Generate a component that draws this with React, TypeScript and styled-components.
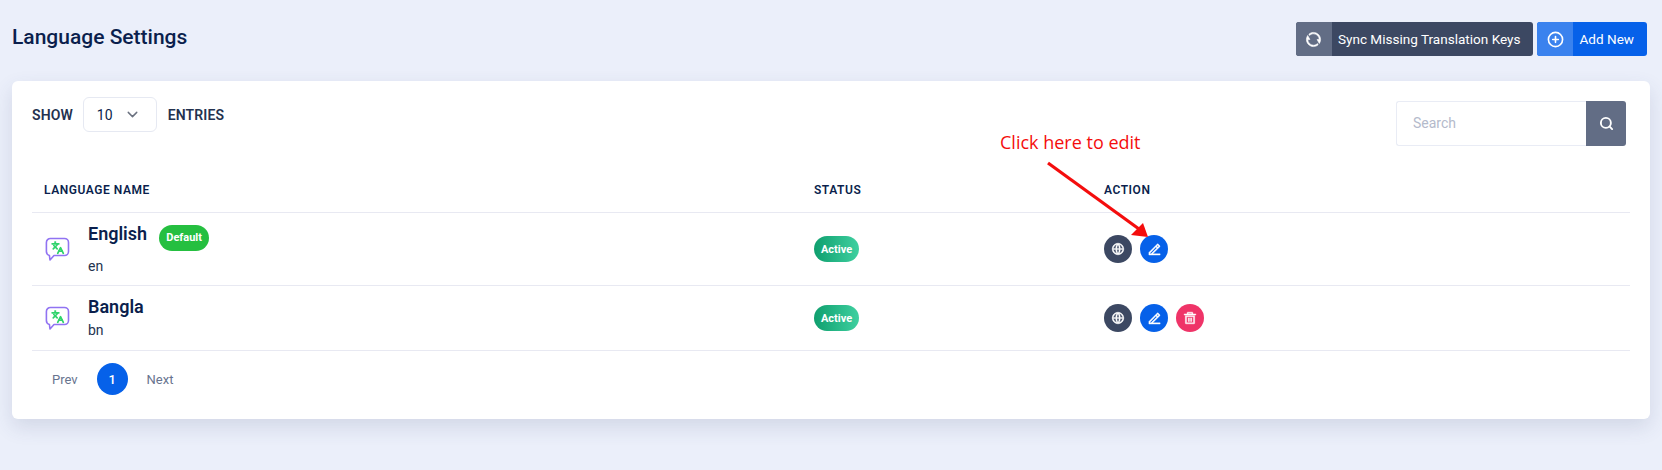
import React from "react";
import styled, { createGlobalStyle } from "styled-components";
import { RiEdit2Line, RiDeleteBin5Line, RiGlobalLine, RiRefreshLine } from "react-icons/ri";
import { LuSearch, LuCirclePlus, LuChevronDown } from "react-icons/lu";

const GlobalStyle = createGlobalStyle`
  html, body {
    margin: 0;
    padding: 0;
    background: #ebeffa;
    font-family: Roboto, "Liberation Sans", sans-serif;
    color: #0b1f4d;
  }
`;

interface Language {
  name: string;
  code: string;
  isDefault?: boolean;
  canDelete?: boolean;
}

const languages: Language[] = [
  { name: "English", code: "en", isDefault: true },
  { name: "Bangla", code: "bn", canDelete: true },
];

function TranslateBubble() {
  return (
    <svg width="25" height="25" viewBox="0 0 25 25" fill="none">
      <path
        d="M5.5 1.5h14a4 4 0 0 1 4 4v9a4 4 0 0 1-4 4h-10.5l-4 4.5-.6-4.6a4 4 0 0 1-3-3.9v-9a4 4 0 0 1 4-4z"
        stroke="#9173f2"
        strokeWidth="1.6"
        strokeLinejoin="round"
      />
      <g transform="translate(6 4) scale(0.56)" stroke="#2fd36b" strokeWidth="3" strokeLinecap="round" strokeLinejoin="round">
        <path d="m5 8 6 6" />
        <path d="m4 14 6-6 2-3" />
        <path d="M2 5h12" />
        <path d="M7 2h1" />
        <path d="m22 22-5-10-5 10" />
        <path d="M14 18h6" />
      </g>
    </svg>
  );
}

export default function App() {
  return (
    <Page>
      <GlobalStyle />
      <Header>
        <Title>Language Settings</Title>
        <HeaderActions>
          <IconButton $main="#3c4862" $side="#626d85">
            <span><RiRefreshLine size={17} stroke="currentColor" strokeWidth={0.8} /></span>
            <b>Sync Missing Translation Keys</b>
          </IconButton>
          <IconButton $main="#0661e9" $side="#3a82ee">
            <span><LuCirclePlus size={17} strokeWidth={2.3} /></span>
            <b>Add New</b>
          </IconButton>
        </HeaderActions>
      </Header>
      <Card>
        <Toolbar>
          <Entries>
            <EntriesLabel>SHOW</EntriesLabel>
            <Select>
              <span>10</span>
              <LuChevronDown size={17} color="#6b7280" />
            </Select>
            <EntriesLabel>ENTRIES</EntriesLabel>
          </Entries>
          <SearchBox>
            <SearchInput placeholder="Search" />
            <SearchButton><LuSearch size={15} strokeWidth={3} /></SearchButton>
          </SearchBox>
        </Toolbar>
        <HeadRow>
          <HeadCell>LANGUAGE NAME</HeadCell>
          <HeadCell>STATUS</HeadCell>
          <HeadCell>ACTION</HeadCell>
        </HeadRow>
        {languages.map((lang) => (
          <Row key={lang.code} $tall={lang.isDefault}>
            <NameCell>
              <TranslateBubble />
              <NameBlock>
                <NameLine $spaced={lang.isDefault}>
                  <Name>{lang.name}</Name>
                  {lang.isDefault && <DefaultBadge>Default</DefaultBadge>}
                </NameLine>
                <Code>{lang.code}</Code>
              </NameBlock>
            </NameCell>
            <Cell>
              <ActiveBadge>Active</ActiveBadge>
            </Cell>
            <ActionCell>
              <RoundButton $bg="#3c4862"><RiGlobalLine size={14} stroke="currentColor" strokeWidth={0.7} /></RoundButton>
              <RoundButton $bg="#0661e9"><RiEdit2Line size={15} stroke="currentColor" strokeWidth={0.6} /></RoundButton>
              {lang.canDelete && (
                <RoundButton $bg="#ef3468"><RiDeleteBin5Line size={14} stroke="currentColor" strokeWidth={0.7} /></RoundButton>
              )}
            </ActionCell>
          </Row>
        ))}
        <Pagination>
          <PageLink>Prev</PageLink>
          <PageCurrent>1</PageCurrent>
          <PageLink>Next</PageLink>
        </Pagination>
        <Note>Click here to edit</Note>
        <Arrow width="110" height="90" viewBox="0 0 110 90">
          <path d="M2 2 L93 68" stroke="#f40d0d" strokeWidth="3.2" />
          <path d="M102 76 L85 74 L97 62 Z" fill="#f40d0d" />
        </Arrow>
      </Card>
    </Page>
  );
}

const Page = styled.div`
  width: 1662px;
  height: 470px;
  box-sizing: border-box;
  padding: 22px 12px 0;
  overflow: hidden;
`;

const Header = styled.div`
  display: flex;
  justify-content: space-between;
  align-items: flex-start;
  height: 59px;
  padding-right: 3px;
`;

const Title = styled.h1`
  margin: 2px 0 0;
  font-size: 21px;
  line-height: 26px;
  font-weight: 500;
  color: #0b1f4d;
`;

const HeaderActions = styled.div`
  display: flex;
  gap: 4px;
`;

const IconButton = styled.div<{ $main: string; $side: string }>`
  display: flex;
  height: 34px;
  border-radius: 3px;
  overflow: hidden;
  background: ${(p) => p.$main};
  color: #fff;

  span {
    display: flex;
    align-items: center;
    justify-content: center;
    width: 36px;
    background: ${(p) => p.$side};
  }

  b {
    display: flex;
    align-items: center;
    padding: 0 13px 0 6px;
    font-size: 13.55px;
    font-weight: 400;
  }
`;

const Card = styled.div`
  position: relative;
  width: 1638px;
  height: 338px;
  box-sizing: border-box;
  padding: 16px 20px 0;
  background: #fff;
  border-radius: 6px;
  box-shadow: 0 8px 20px rgba(60, 72, 110, 0.14);
`;

const Toolbar = styled.div`
  display: flex;
  justify-content: space-between;
  align-items: flex-start;
  height: 83px;
  padding-right: 4px;
`;

const Entries = styled.div`
  display: flex;
  align-items: center;
  gap: 10px;
`;

const EntriesLabel = styled.span`
  font-size: 14px;
  font-weight: 600;
  letter-spacing: 0.1px;
  color: #24324f;
`;

const Select = styled.div`
  display: flex;
  align-items: center;
  justify-content: space-between;
  box-sizing: border-box;
  width: 74px;
  height: 35px;
  margin-right: 1px;
  padding: 0 15px 0 13px;
  border: 1px solid #e6e9f2;
  border-radius: 6px;
  font-size: 14px;
  color: #0b1f4d;
`;

const SearchBox = styled.div`
  display: flex;
  height: 45px;
  margin-top: 4px;
`;

const SearchInput = styled.input`
  box-sizing: border-box;
  width: 190px;
  height: 45px;
  padding: 0 16px 2px;
  border: 1px solid #e9ecf5;
  border-right: none;
  border-radius: 3px 0 0 3px;
  outline: none;
  font-family: inherit;
  font-size: 14px;

  &::placeholder {
    color: #b4bacb;
  }
`;

const SearchButton = styled.div`
  display: flex;
  align-items: center;
  justify-content: center;
  width: 40px;
  background: #626d85;
  border-radius: 0 3px 3px 0;
  color: #fff;
`;

const columns = "770px 290px 1fr";

const HeadRow = styled.div`
  display: grid;
  grid-template-columns: ${columns};
  align-items: center;
  box-sizing: border-box;
  height: 32px;
  padding-bottom: 13px;
`;

const HeadCell = styled.div`
  padding-left: 12px;
  font-size: 12px;
  font-weight: 600;
  letter-spacing: 0.55px;
  color: #0b1f4d;
`;

const Row = styled.div<{ $tall?: boolean }>`
  display: grid;
  grid-template-columns: ${columns};
  align-items: center;
  box-sizing: border-box;
  height: ${(p) => (p.$tall ? 73 : 65)}px;
  border-top: 1px solid #e8e9f2;
`;

const Cell = styled.div`
  padding-left: 12px;
`;

const NameCell = styled(Cell)`
  display: flex;
  align-items: center;
  gap: 18px;
  padding-left: 13px;
`;

const NameBlock = styled.div`
  display: flex;
  flex-direction: column;
`;

const NameLine = styled.div<{ $spaced?: boolean }>`
  display: flex;
  align-items: flex-start;
  gap: 12px;
  margin-bottom: ${(p) => (p.$spaced ? 4 : 0)}px;
`;

const Name = styled.span`
  font-size: 18px;
  line-height: 24px;
  font-weight: 600;
  color: #0b1f4d;
`;

const Code = styled.span`
  font-size: 14px;
  line-height: 22px;
  color: #24324f;
`;

const DefaultBadge = styled.span`
  display: flex;
  align-items: center;
  justify-content: center;
  width: 50px;
  height: 26px;
  margin-top: 3px;
  border-radius: 13px;
  background: #25bf40;
  color: #fff;
  font-size: 11px;
  font-weight: 700;
`;

const ActiveBadge = styled.span`
  display: inline-flex;
  align-items: center;
  justify-content: center;
  width: 45px;
  height: 26px;
  border-radius: 13px;
  background: linear-gradient(90deg, #0f9f6e, #3fd0a0);
  color: #fff;
  font-size: 11px;
  font-weight: 700;
`;

const ActionCell = styled(Cell)`
  display: flex;
  gap: 8px;
`;

const RoundButton = styled.div<{ $bg: string }>`
  display: flex;
  align-items: center;
  justify-content: center;
  width: 28px;
  height: 28px;
  border-radius: 50%;
  background: ${(p) => p.$bg};
  color: #fff;
`;

const Pagination = styled.div`
  display: flex;
  align-items: center;
  gap: 19px;
  padding: 12px 0 0 20px;
  border-top: 1px solid #e8e9f2;
`;

const PageLink = styled.span`
  font-size: 13px;
  color: #68748f;
`;

const PageCurrent = styled.span`
  display: flex;
  align-items: center;
  justify-content: center;
  width: 31px;
  height: 32px;
  border-radius: 50%;
  background: #0661e9;
  color: #fff;
  font-size: 13px;
  font-weight: 500;
`;

const Note = styled.span`
  position: absolute;
  left: 988px;
  top: 49px;
  font-family: "Open Sans", sans-serif;
  font-size: 18px;
  color: #f40d0d;
`;

const Arrow = styled.svg`
  position: absolute;
  left: 1034px;
  top: 80px;
`;
